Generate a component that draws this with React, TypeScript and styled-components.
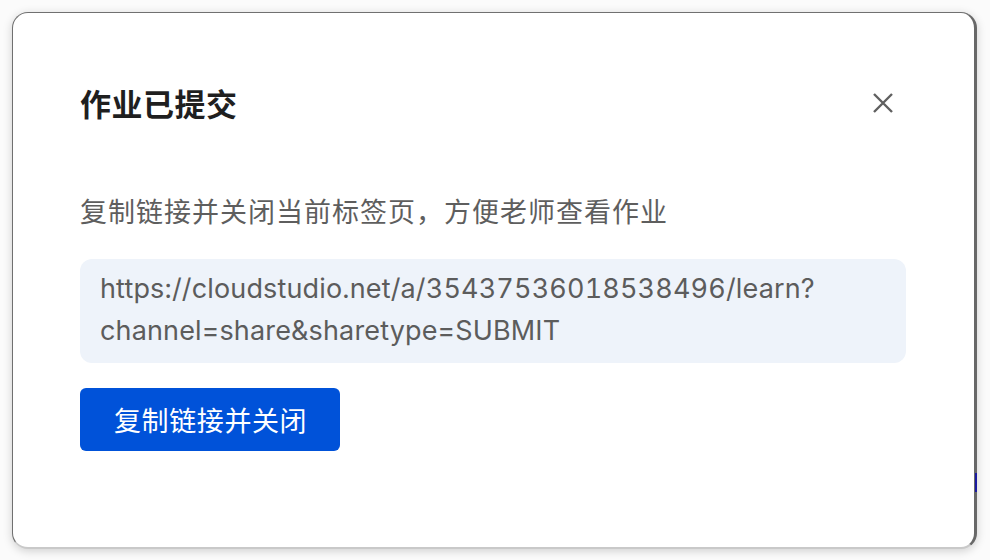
import React from "react";
import styled, { createGlobalStyle } from "styled-components";

const GlobalStyle = createGlobalStyle`
  html, body {
    margin: 0;
    padding: 0;
    background: #ffffff;
    font-family: "Inter", "Noto Sans CJK SC", sans-serif;
  }
  * { box-sizing: border-box; }
`;

const Page = styled.div`
  position: relative;
  width: 990px;
  height: 560px;
  padding: 12px 13px 11px 12px;
  background: #fbfbfb;
  overflow: hidden;
`;

const BehindMark = styled.div`
  position: absolute;
  z-index: 2;
  left: 975px;
  top: 473px;
  width: 2px;
  height: 19px;
  background: #1a1aa0;
`;

const Dialog = styled.div`
  position: relative;
  width: 965px;
  height: 537px;
  background: #ffffff;
  border: 1px solid #707070;
  border-right: 3px solid #686868;
  border-bottom: 2px solid #c9c9c9;
  border-radius: 16px;
  box-shadow: 0 2px 10px rgba(0, 0, 0, 0.18);
  padding: 66px 68px 0 67px;
  display: flex;
  flex-direction: column;
`;

const Header = styled.div`
  display: flex;
  align-items: center;
  justify-content: space-between;
  height: 48px;
`;

const Title = styled.h1`
  margin: 0;
  font-family: "Noto Sans CJK SC", sans-serif;
  font-size: 31px;
  font-weight: 700;
  color: #1f1f1f;
  line-height: 48px;
  letter-spacing: 0.5px;
`;

const CloseButton = styled.button`
  border: none;
  background: transparent;
  padding: 0;
  margin-right: 12px;
  width: 22px;
  height: 22px;
  display: flex;
  align-items: center;
  justify-content: center;
  cursor: pointer;
`;

const Description = styled.p`
  margin: 62px 0 0 0;
  font-family: "Noto Sans CJK SC", sans-serif;
  font-size: 27px;
  line-height: 44px;
  color: #5e5e5e;
  letter-spacing: 1px;
`;

const LinkBox = styled.div`
  margin-top: 26px;
  background: #eef3fa;
  border-radius: 12px;
  padding: 9px 20px 11px 20px;
  font-family: "Inter", "Noto Sans CJK SC", sans-serif;
  font-size: 27px;
  font-variant-numeric: tabular-nums;
  letter-spacing: 0.15px;
  line-height: 42px;
  color: #5c5c5c;
`;

const PrimaryButton = styled.button`
  margin-top: 25px;
  align-self: flex-start;
  height: 63px;
  padding: 0 33px 0 34px;
  border: none;
  border-radius: 6px;
  background: #0052d9;
  color: #ffffff;
  font-family: "Noto Sans CJK SC", sans-serif;
  font-size: 27px;
  letter-spacing: 0.6px;
  cursor: pointer;
`;

const CloseIcon = () => (
  <svg width="22" height="22" viewBox="0 0 22 22">
    <path d="M2 2 L20 20 M20 2 L2 20" stroke="#606060" strokeWidth="2.4" strokeLinecap="butt" />
  </svg>
);

export default function App() {
  return (
    <>
      <GlobalStyle />
      <Page>
        <BehindMark />
        <Dialog>
          <Header>
            <Title>作业已提交</Title>
            <CloseButton aria-label="关闭">
              <CloseIcon />
            </CloseButton>
          </Header>
          <Description>复制链接并关闭当前标签页，方便老师查看作业</Description>
          <LinkBox>
            https://cloudstudio.net/a/35437536018538496/learn?
            <br />
            channel=share&amp;sharetype=SUBMIT
          </LinkBox>
          <PrimaryButton>复制链接并关闭</PrimaryButton>
        </Dialog>
      </Page>
    </>
  );
}
